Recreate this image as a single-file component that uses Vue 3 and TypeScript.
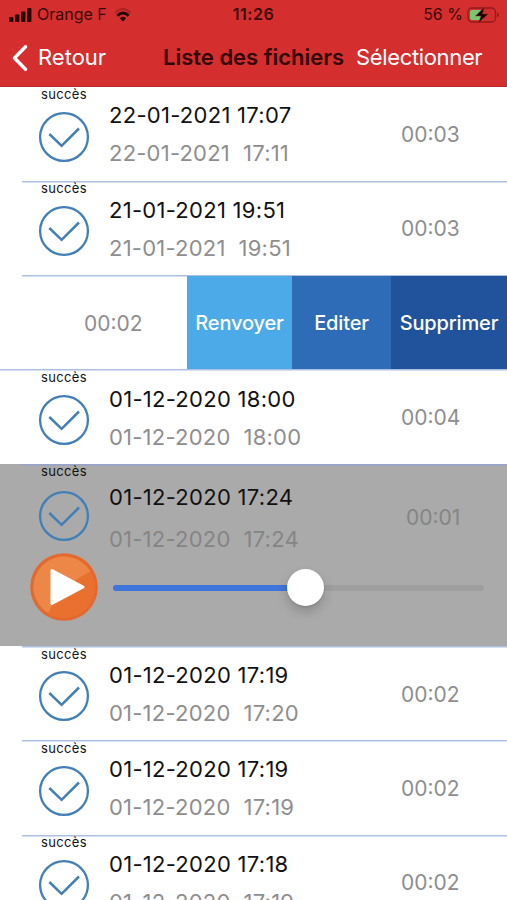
<script setup lang="ts">
import { ref } from 'vue'

interface Recording {
  id: number
  title: string
  day: string
  time: string
  duration: string
  mode: 'normal' | 'swiped' | 'playing'
}

const recordings = ref<Recording[]>([
  { id: 1, title: '22-01-2021 17:07', day: '22-01-2021', time: '17:11', duration: '00:03', mode: 'normal' },
  { id: 2, title: '21-01-2021 19:51', day: '21-01-2021', time: '19:51', duration: '00:03', mode: 'normal' },
  { id: 3, title: '', day: '', time: '', duration: '00:02', mode: 'swiped' },
  { id: 4, title: '01-12-2020 18:00', day: '01-12-2020', time: '18:00', duration: '00:04', mode: 'normal' },
  { id: 5, title: '01-12-2020 17:24', day: '01-12-2020', time: '17:24', duration: '00:01', mode: 'playing' },
  { id: 6, title: '01-12-2020 17:19', day: '01-12-2020', time: '17:20', duration: '00:02', mode: 'normal' },
  { id: 7, title: '01-12-2020 17:19', day: '01-12-2020', time: '17:19', duration: '00:02', mode: 'normal' },
  { id: 8, title: '01-12-2020 17:18', day: '01-12-2020', time: '17:19', duration: '00:02', mode: 'normal' },
])

const progress = ref(51.8)
</script>

<template>
  <div class="screen">
    <header class="header">
      <div class="status">
        <div class="carrier">
          <svg class="signal" viewBox="0 0 23 14" width="23" height="14">
            <rect x="0" y="9" width="4.4" height="5" rx="1" />
            <rect x="6" y="6.4" width="4.4" height="7.6" rx="1" />
            <rect x="12" y="3.4" width="4.4" height="10.6" rx="1" />
            <rect x="18" y="0" width="4.4" height="14" rx="1" />
          </svg>
          <span class="carrier-name">Orange F</span>
          <svg class="wifi" viewBox="0 0 18 14" width="18" height="14" fill="none">
            <path d="M1.3 4.8Q9-2.6 16.7 4.8" stroke="#ad2424" stroke-width="2" />
            <path d="M3.4 7.6Q9 2.4 14.6 7.6" stroke="#260405" stroke-width="2.8" />
            <path d="M5.8 10.2Q9 7.4 12.2 10.2L9 13.6Z" fill="#260405" />
          </svg>
        </div>
        <span class="clock">11:26</span>
        <div class="power">
          <span class="percent">56 %</span>
          <svg class="battery" viewBox="0 0 33 18" width="33" height="18">
            <rect x="1" y="2" width="27.5" height="14" rx="4" fill="none" stroke="#8f1d1e" stroke-width="1.3" />
            <path d="M5 4H16V14H5Q3 14 3 12V6Q3 4 5 4Z" fill="#76c76e" />
            <path d="M30 6.5Q32 7.5 32 9T30 11.5Z" fill="#8f1d1e" />
            <path d="M17.5 1L8.5 10H14L11.5 17L21 8H15.5Z" fill="#1c0405" stroke="#a12b25" stroke-width=".5" />
          </svg>
        </div>
      </div>
      <nav class="nav">
        <button class="back" type="button">
          <svg viewBox="0 0 16 26" width="16" height="26" fill="none">
            <path d="M13.5 1.8L2.5 13L13.5 24.2" stroke="#fff" stroke-width="3.4" stroke-linecap="round" stroke-linejoin="round" />
          </svg>
          <span>Retour</span>
        </button>
        <h1 class="heading">Liste des fichiers</h1>
        <button class="select" type="button">Sélectionner</button>
      </nav>
    </header>

    <ul class="list">
      <li v-for="item in recordings" :key="item.id" class="row" :class="item.mode">
        <template v-if="item.mode === 'swiped'">
          <div class="swiped-cell"><span class="duration">{{ item.duration }}</span></div>
          <button class="action resend" type="button">Renvoyer</button>
          <button class="action edit" type="button">Editer</button>
          <button class="action delete" type="button">Supprimer</button>
        </template>
        <template v-else>
          <div class="info">
            <div class="state">
              <span class="state-label">succès</span>
              <svg class="check" viewBox="0 0 52 52" width="52" height="52" fill="none" stroke="#437fb7" stroke-width="2.3">
                <circle cx="26" cy="26" r="23.9" />
                <path d="M11.3 23L23.6 34.8L41 17.5" stroke-width="2.5" />
              </svg>
            </div>
            <div class="dates">
              <span class="title">{{ item.title }}</span>
              <span class="sub"><span>{{ item.day }}</span><span>{{ item.time }}</span></span>
            </div>
            <span class="duration">{{ item.duration }}</span>
          </div>
          <div v-if="item.mode === 'playing'" class="player">
            <svg class="play" viewBox="0 0 68 68" width="68" height="68">
              <circle cx="34" cy="34" r="33.8" fill="#e4692e" />
              <circle cx="34" cy="34" r="31" fill="#ea702f" />
              <path d="M18.4 60.2A30.5 30.5 0 1 1 60.2 18.4C47 25 27 38 18.4 60.2Z" fill="#ed8747" />
              <path d="M22 17.5L53 34L22 50.5Z" fill="#fff" stroke="#fff" stroke-width="3" stroke-linejoin="round" />
            </svg>
            <div class="track">
              <div class="fill" :style="{ width: progress + '%' }"><span class="thumb"></span></div>
            </div>
          </div>
        </template>
      </li>
    </ul>
  </div>
</template>

<style>
body {
  margin: 0;
  overflow: hidden;
}
</style>

<style scoped>
.screen {
  width: 507px;
  height: 900px;
  overflow: hidden;
  background: #fff;
  font-family: Inter, "Liberation Sans", sans-serif;
  color: #111;
}
button {
  box-sizing: border-box;
  border: 0;
  padding: 0;
  background: none;
  font: inherit;
  color: #fff;
  white-space: nowrap;
}
.header {
  box-sizing: border-box;
  height: 87px;
  background: #d42e2e;
  border-bottom: 1px solid #b92d2a;
}
.status {
  display: grid;
  grid-template-columns: 1fr 60px 1fr;
  align-items: center;
  height: 29px;
  color: #3b0708;
  font-size: 16px;
  line-height: 29px;
  white-space: nowrap;
}
.carrier {
  display: flex;
  align-items: center;
  padding-left: 9px;
}
.signal {
  fill: #260405;
}
.carrier-name {
  width: 69px;
  margin: 0 8px 0 5px;
}
.clock {
  font-weight: 600;
  letter-spacing: .5px;
  text-align: center;
}
.power {
  display: flex;
  align-items: center;
  justify-content: flex-end;
  gap: 4px;
  padding-right: 7px;
}
.nav {
  display: flex;
  align-items: center;
  height: 57px;
  font-size: 22px;
  line-height: 57px;
  letter-spacing: -.2px;
}
.back {
  display: flex;
  align-items: center;
  gap: 10px;
  width: 163px;
  padding-left: 12px;
}
.heading {
  width: 193px;
  margin: 0;
  font-size: 22px;
  font-weight: 600;
  letter-spacing: 0;
  color: #330506;
  white-space: nowrap;
}
.select {
  letter-spacing: -.35px;
}
.list {
  margin: 0;
  padding: 0;
  list-style: none;
}
.row {
  height: 94.4px;
  background: linear-gradient(#adc0df, #adc0df) 22px 0 / 100% 1.5px no-repeat;
}
.row:first-child {
  height: 93.6px;
  background: none;
}
.info {
  box-sizing: border-box;
  display: flex;
  height: 94.4px;
  padding-top: .8px;
}
.row:first-child .info {
  padding-top: 0;
}
.row:first-child .dates {
  padding-top: 9px;
}
.state {
  display: flex;
  flex-direction: column;
  align-items: center;
  width: 88px;
  padding-left: 20px;
}
.state-label {
  height: 14px;
  margin-bottom: 9.8px;
  font-size: 13px;
  line-height: 15px;
  letter-spacing: .35px;
}
.dates {
  display: flex;
  flex-direction: column;
  width: 291px;
  padding: 9.5px 0 0 1px;
  margin-right: 1px;
  font-size: 22px;
  line-height: 38px;
  white-space: nowrap;
}
.title {
  letter-spacing: .28px;
}
.sub {
  display: flex;
  gap: 13px;
  letter-spacing: .22px;
  color: #8e8e90;
}
.duration {
  font-size: 21px;
  line-height: 95px;
  color: #8e8e90;
}
.swiped {
  display: flex;
}
.swiped-cell {
  width: 103px;
  padding: 1px 0 0 84px;
}
.swiped + .row {
  background-position: 0 0;
}
.action {
  height: 93.4px;
  margin-top: 1px;
  font-size: 20px;
  font-weight: 500;
  letter-spacing: -.15px;
}
.resend {
  width: 105px;
  background: #4daae9;
}
.edit {
  width: 99px;
  background: #2e6cb7;
}
.delete {
  width: 116px;
  background: #21529c;
}
.playing {
  height: 182px;
  background-color: #aaa;
  background-image: linear-gradient(#96a4cb, #96a4cb);
}
.playing .info {
  height: 89px;
  padding-top: 0;
}
.playing .state-label {
  margin-bottom: 12px;
}
.playing .dates {
  width: 296px;
  padding-top: 12px;
  line-height: 42px;
}
.playing .sub,
.playing .duration {
  color: #858585;
}
.playing .duration {
  line-height: 107px;
}
.player {
  display: flex;
  align-items: center;
  gap: 15px;
  height: 69px;
  padding-left: 30px;
}
.track {
  width: 371px;
  height: 6px;
  margin-top: 2px;
  border-radius: 3px;
  background: #9f9f9f;
}
.fill {
  position: relative;
  height: 6px;
  border-radius: 3px;
  background: #3e75dc;
}
.thumb {
  position: absolute;
  top: -16.5px;
  right: -18.5px;
  width: 37px;
  height: 37px;
  border-radius: 50%;
  background: #fff;
  box-shadow: 0 6px 12px rgba(0, 0, 0, .18), 0 1px 2px rgba(0, 0, 0, .12);
}
</style>
